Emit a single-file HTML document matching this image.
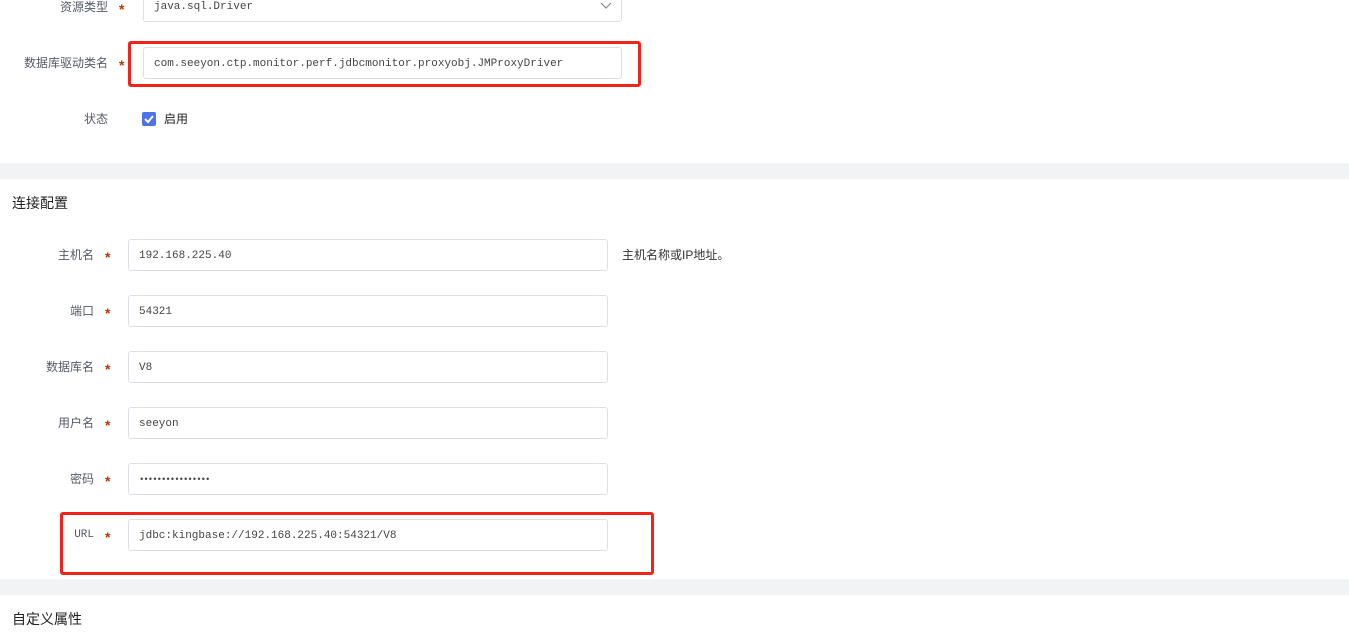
<!DOCTYPE html>
<html><head><meta charset="utf-8"><style>
body{margin:0;width:1349px;height:634px;background:#fff;position:relative;overflow:hidden;font-family:"Liberation Sans","Noto Sans CJK SC",sans-serif;}
.a{position:absolute}
.lbl{position:absolute;font-size:12px;color:#555a66;text-align:right;line-height:16px}
.st{position:absolute;color:#b33a00;font-size:14px;line-height:16px;font-weight:bold;margin-top:1px}
.in{position:absolute;box-sizing:border-box;border:1px solid #dcdfe6;border-radius:3px;background:#fff;font-family:"Liberation Mono",monospace;font-size:11px;color:#444;padding-left:10px;line-height:32px;height:32px}
.band{position:absolute;left:0;width:1349px;background:#f2f3f5}
.red{position:absolute;border:3px solid #f2231b;border-radius:3px;box-sizing:border-box}
.h{position:absolute;left:12px;font-size:14px;color:#222;line-height:18px}
</style></head><body>
<div class="lbl" style="left:0;width:108px;top:-1px">资源类型</div><div class="st" style="left:119px;top:0">*</div>
<div class="in" style="left:143px;top:-10px;width:479px;">java.sql.Driver</div>
<svg class="a" style="left:600px;top:2px" width="12" height="8"><path d="M1 1 L6 6 L11 1" stroke="#888" fill="none" stroke-width="1.2"/></svg>
<div class="red" style="left:128px;top:41px;width:513px;height:46px"></div>
<div class="lbl" style="left:0;width:108px;top:55px">数据库驱动类名</div><div class="st" style="left:119px;top:56px">*</div>
<div class="in" style="left:143px;top:47px;width:479px;">com.seeyon.ctp.monitor.perf.jdbcmonitor.proxyobj.JMProxyDriver</div>
<div class="lbl" style="left:0;width:108px;top:111px">状态</div>
<div class="a" style="left:142px;top:112px;width:14px;height:14px;background:#4a74e8;border-radius:2px"><svg width="14" height="14"><path d="M3 7 L6 10 L11 4" stroke="#fff" stroke-width="2" fill="none"/></svg></div>
<div class="a" style="left:164px;top:111px;font-size:12px;color:#222;line-height:16px;font-weight:normal">启用</div>
<div class="band" style="top:163px;height:16px"></div>
<div class="h" style="top:194px">连接配置</div>

<div class="lbl" style="left:0;width:94px;top:247px">主机名</div><div class="st" style="left:105px;top:248px">*</div>
<div class="in" style="left:128px;top:239px;width:480px">192.168.225.40</div>
<div class="a" style="left:622px;top:247px;font-size:12px;color:#333;line-height:16px">主机名称或IP地址。</div>
<div class="lbl" style="left:0;width:94px;top:303px">端口</div><div class="st" style="left:105px;top:304px">*</div>
<div class="in" style="left:128px;top:295px;width:480px">54321</div>
<div class="lbl" style="left:0;width:94px;top:359px">数据库名</div><div class="st" style="left:105px;top:360px">*</div>
<div class="in" style="left:128px;top:351px;width:480px">V8</div>
<div class="lbl" style="left:0;width:94px;top:415px">用户名</div><div class="st" style="left:105px;top:416px">*</div>
<div class="in" style="left:128px;top:407px;width:480px">seeyon</div>
<div class="lbl" style="left:0;width:94px;top:471px">密码</div><div class="st" style="left:105px;top:472px">*</div>
<div class="in" style="left:128px;top:463px;width:480px;font-size:9px;letter-spacing:-1px">••••••••••••••••</div>
<div class="red" style="left:60px;top:512px;width:594px;height:63px"></div>
<div class="lbl" style="left:0;width:94px;top:527px;font-family:'Liberation Mono',monospace;font-size:11px">URL</div><div class="st" style="left:105px;top:528px">*</div>
<div class="in" style="left:128px;top:519px;width:480px">jdbc:kingbase://192.168.225.40:54321/V8</div>
<div class="band" style="top:579px;height:16px"></div>
<div class="h" style="top:610px">自定义属性</div>
</body></html>
